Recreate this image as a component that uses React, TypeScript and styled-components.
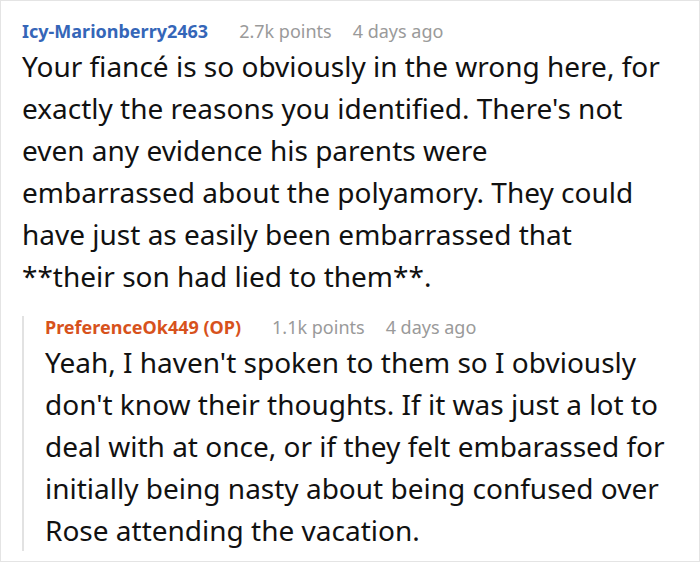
import React from "react";
import styled, { createGlobalStyle } from "styled-components";

const GlobalStyle = createGlobalStyle`
    html, body {
        margin: 0;
        padding: 0;
        background: #fff;
    }
    * {
        box-sizing: border-box;
    }
`;

const Frame = styled.div`
    width: 700px;
    height: 562px;
    border: 1px solid #e4e4e4;
    padding: 19px 34px 0 21px;
    font-family: "Noto Sans", "Open Sans", sans-serif;
    overflow: hidden;
`;

const Comment = styled.div<{ $reply?: boolean }>`
    padding-left: ${(p) => (p.$reply ? "21px" : "0")};
    border-left: ${(p) => (p.$reply ? "2px solid #e2e2e2" : "none")};
    margin-top: ${(p) => (p.$reply ? "19px" : "0")};
`;

const Header = styled.div`
    display: flex;
    align-items: baseline;
    font-size: 18px;
    line-height: 22px;
    white-space: nowrap;
`;

const Author = styled.span<{ $op?: boolean }>`
    font-weight: 700;
    color: ${(p) => (p.$op ? "#d7521c" : "#3566b8")};
    margin-right: 31px;
`;

const Meta = styled.span`
    color: #9a9a9a;
    margin-right: 21px;
`;

const Body = styled.p`
    margin: 3px 0 0;
    font-size: 28px;
    line-height: 42px;
    color: #111;
`;

type CommentData = {
    author: string;
    op?: boolean;
    points: string;
    age: string;
    text: string;
};

const top: CommentData = {
    author: "Icy-Marionberry2463",
    points: "2.7k points",
    age: "4 days ago",
    text: "Your fiancé is so obviously in the wrong here, for exactly the reasons you identified. There's not even any evidence his parents were embarrassed about the polyamory. They could have just as easily been embarrassed that **their son had lied to them**.",
};

const reply: CommentData = {
    author: "PreferenceOk449 (OP)",
    op: true,
    points: "1.1k points",
    age: "4 days ago",
    text: "Yeah, I haven't spoken to them so I obviously don't know their thoughts. If it was just a lot to deal with at once, or if they felt embarassed for initially being nasty about being confused over Rose attending the vacation.",
};

const CommentHeader = ({ c }: { c: CommentData }) => (
    <Header>
        <Author $op={c.op}>{c.author}</Author>
        <Meta>{c.points}</Meta>
        <Meta>{c.age}</Meta>
    </Header>
);

export default function App() {
    return (
        <>
            <GlobalStyle />
            <Frame>
                <Comment>
                    <CommentHeader c={top} />
                    <Body>{top.text}</Body>
                    <Comment $reply>
                        <CommentHeader c={reply} />
                        <Body>{reply.text}</Body>
                    </Comment>
                </Comment>
            </Frame>
        </>
    );
}
